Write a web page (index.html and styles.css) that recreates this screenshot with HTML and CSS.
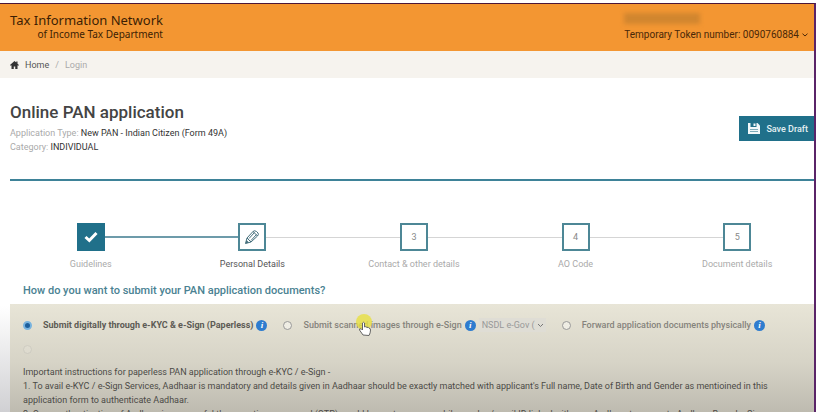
FILE: index.html
```html
<!DOCTYPE html>
<html lang="en">
<head>
  <meta charset="utf-8">
  <title>Online PAN application</title>
  <link rel="stylesheet" href="styles.css">
</head>
<body>
  <div class="page">
    <header class="header">
      <div class="brand">
        <div class="brand-name">Tax Information Network</div>
        <div class="brand-sub">of Income Tax Department</div>
      </div>
      <div class="account">
        <div class="account-name"></div>
        <button class="token" type="button">Temporary Token number: 0090760884
          <svg width="6" height="4" viewBox="0 0 6 4"><path d="M0.5 0.7L3 3L5.5 0.7" fill="none" stroke="currentColor"/></svg>
        </button>
      </div>
    </header>

    <nav class="breadcrumb">
      <svg width="9" height="8" viewBox="0 0 18 16"><path d="M9 0L0 8l1.5 1.5L3 8.3V16h4.500v-5h3v5H15V8.300l1.500 1.200L18 8l-3-2.700V1h-2.500v2z" fill="#333"/></svg>
      <a class="home" href="#">Home</a>
      <span class="slash">/</span>
      <a href="#">Login</a>
    </nav>

    <main class="content">
      <div class="title-row">
        <div class="title">
          <h1>Online PAN application</h1>
          <p class="meta">Application Type: <b>New PAN - Indian Citizen (Form 49A)</b></p>
          <p class="meta">Category: <b>INDIVIDUAL</b></p>
        </div>
        <button class="save" type="button">
          <svg width="12" height="11" viewBox="0 0 24 22"><path d="M0 0h19l5 5v17H0z" fill="#f2f8fa"/><path d="M5 0h12v8H5z" fill="#20708a"/><path d="M11 1h4v5h-4z" fill="#f2f8fa"/><path d="M4 13h16M4 17h16" stroke="#7eacba" stroke-width="2"/></svg>
          Save Draft
        </button>
      </div>

      <ol class="steps">
        <li class="step done">
          <span class="box"><svg width="14" height="12" viewBox="0 0 14 12"><path d="M1.500 6L5.300 9.500L12.500 2" fill="none" stroke="#fff" stroke-width="3"/></svg></span>
          <span class="step-name">Guidelines</span>
        </li>
        <li class="step current">
          <span class="box"><svg width="16" height="16" viewBox="0 0 32 32"><path d="M3 29L6 18L18 5Q21 2 25 5L28 8Q30 11 27 14L14 26Z M6 18L14 26 M10 19L21 7 M14 23L25 11 M18 5L27 14" fill="none" stroke="#456f7c" stroke-width="2"/><path d="M3 29l2-7 5 5z" fill="#456f7c"/></svg></span>
          <span class="step-name">Personal Details</span>
        </li>
        <li class="step">
          <span class="box">3</span>
          <span class="step-name">Contact &amp; other details</span>
        </li>
        <li class="step">
          <span class="box">4</span>
          <span class="step-name">AO Code</span>
        </li>
        <li class="step">
          <span class="box">5</span>
          <span class="step-name">Document details</span>
        </li>
      </ol>

      <h2>How do you want to submit your PAN application documents?</h2>

      <section class="panel">
        <div class="options">
          <div class="option selected">
            <input type="radio" name="mode" id="paperless" checked>
            <label for="paperless">Submit digitally through e-KYC &amp; e-Sign (Paperless)</label>
            <button class="info" type="button" aria-label="About paperless">i</button>
          </div>
          <div class="option">
            <input type="radio" name="mode" id="scanned">
            <label for="scanned">Submit scanned images through e-Sign</label>
            <button class="info" type="button" aria-label="About e-Sign">i</button>
            <select class="provider" aria-label="e-Sign provider">
              <option>NSDL e-Gov (</option>
            </select>
            <svg class="pointer" width="20" height="24" viewBox="0 0 20 24"><circle cx="9" cy="8" r="8" fill="#e7e040" opacity="0.8"/><path d="M8 21L4.500 16Q4 14 6.500 15L7.500 16V9Q8.500 7.500 9.500 9V13Q11 12 12 13.500Q13.500 12.800 14 14.200Q15.500 14 15.500 16Q15.500 19 14 21.500Z" fill="#fff" stroke="#666" stroke-width="1"/></svg>
          </div>
          <div class="option">
            <input type="radio" name="mode" id="physical">
            <label for="physical">Forward application documents physically</label>
            <button class="info" type="button" aria-label="About physical documents">i</button>
          </div>
        </div>
        <div class="option unavailable">
          <input type="radio" name="mode" aria-label="Unavailable" disabled>
        </div>
        <div class="instructions">
          <p>Important instructions for paperless PAN application through e-KYC / e-Sign -</p>
          <p>1. To avail e-KYC / e-Sign Services, Aadhaar is mandatory and details given in Aadhaar should be exactly matched with applicant's Full name, Date of Birth and Gender as mentioined in this application form to authenticate Aadhaar.</p>
          <p>2. Once authentication of Aadhaar is successful then one time password (OTP) would be sent on your mobile number/email ID linked with your Aadhaar to generate Aadhaar Based e-Sign.</p>
        </div>
      </section>
    </main>
  </div>
</body>
</html>
```

FILE: styles.css
```css
:root {
  --teal: #20708a;
  --line: #d5d5d5;
}

* {
  box-sizing: border-box;
}

body {
  margin: 0;
  padding: 3px 1px 0 0;
  height: 100vh;
  overflow: hidden;
  font-family: Roboto, "Liberation Sans", sans-serif;
  font-size: 9px;
  color: #444;
  background: #fff;
}

h1, h2, p, ol {
  margin: 0;
  padding: 0;
}

button {
  font-family: inherit;
  border: none;
  cursor: pointer;
}

.page {
  height: 100%;
  overflow: hidden;
  border-top: 1px solid #4b1638;
  border-right: 2px solid #5a2468;
  background: linear-gradient(#fff 74%, #d0d0d3);
}

/* Header */
.header {
  display: flex;
  justify-content: space-between;
  height: 47px;
  padding: 9px 6px 0 10px;
  background: #f39632;
  color: #4a2808;
}

.brand {
  font-family: "Noto Sans", sans-serif;
  color: #3c1e04;
  text-align: right;
}

.brand-name {
  font-size: 13px;
  line-height: 15px;
}

.brand-sub {
  font-size: 10px;
  line-height: 12px;
}

.account-name {
  width: 76px;
  height: 11px;
  background: #d1862f;
  filter: blur(2px);
}

.token {
  display: flex;
  align-items: center;
  gap: 3px;
  margin-top: 4px;
  padding: 0;
  background: none;
  color: #4a2808;
  font-size: 10px;
  line-height: 14px;
}

.breadcrumb {
  display: flex;
  align-items: center;
  gap: 6px;
  height: 27px;
  padding-left: 10px;
  background: #f6f3ee;
}

.breadcrumb a, .slash {
  color: #aaa;
  text-decoration: none;
}

.breadcrumb .home {
  color: #555;
}

/* Content */
.content {
  padding-left: 10px;
}

.title-row {
  display: flex;
  justify-content: space-between;
  align-items: center;
  height: 103px;
  border-bottom: 2px solid #3e8298;
}

.title {
  padding-bottom: 4px;
}

h1 {
  padding-bottom: 2px;
  font-size: 17px;
  line-height: 24px;
  font-weight: 500;
}

.meta {
  color: #aaa;
  line-height: 14px;
}

.meta b {
  font-weight: 400;
  color: #333;
}

.save {
  display: flex;
  align-items: center;
  gap: 6px;
  height: 25px;
  padding: 0 6px 0 9px;
  background: var(--teal);
  color: #e4f0f4;
  font-size: 9px;
  font-weight: 500;
}

/* Steps */
.steps {
  display: flex;
  margin-right: -4px;
  padding-top: 42px;
  list-style: none;
}

.step {
  flex: 1;
  display: grid;
  grid-template-columns: 1fr 28px 1fr;
  align-items: center;
  row-gap: 6px;
  color: #aaa;
}

.step::before, .step::after {
  content: "";
  grid-row: 1;
  height: 1px;
  background: var(--line);
}

.step::before {
  grid-column: 1;
}

.step::after {
  grid-column: 3;
}

.step:first-child::before, .step:last-child::after {
  background: none;
}

.done::after, .current::before {
  height: 2px;
  background: #6d9baa;
}

.box {
  grid-row: 1;
  grid-column: 2;
  display: flex;
  align-items: center;
  justify-content: center;
  height: 28px;
  border: 2px solid #4d8796;
  color: #888;
}

.done .box {
  background: var(--teal);
  border-color: var(--teal);
}

.step-name {
  grid-column: 1 / 4;
  text-align: center;
  line-height: 14px;
}

.current .step-name {
  color: #555;
}

h2 {
  padding: 13px 0 6px 13px;
  color: #4a8292;
  font-size: 11px;
  line-height: 14px;
  font-weight: 500;
}

/* Submission panel */
.panel {
  height: 150px;
  padding: 14px 26px 0 13px;
  background: linear-gradient(#e8e5d7, #d6d3c6 60px, #bebbb0 108px);
}

.options {
  display: flex;
  gap: 16px;
}

.option {
  position: relative;
  display: flex;
  align-items: center;
  height: 14px;
  color: #85837c;
  font-weight: 500;
  white-space: nowrap;
}

.selected {
  color: #5d5b55;
  font-weight: 700;
}

.unavailable {
  margin: 10px 0 9px;
  opacity: 0.2;
}

.option input {
  appearance: none;
  width: 9px;
  height: 9px;
  margin: 0 11px 0 0;
  border: 1px solid #999;
  border-radius: 50%;
  background: #efede4;
}

.option input:checked {
  border: 2px solid #78b3df;
  background: #1d5f9c;
}

.info {
  width: 11px;
  height: 11px;
  margin-left: 3px;
  padding: 0;
  border-radius: 50%;
  background: #2e7ccf;
  color: #fff;
  font: italic bold 9px/11px "Liberation Serif", serif;
}

.provider {
  appearance: none;
  width: 67px;
  height: 14px;
  margin-left: 3px;
  padding: 0 0 0 3px;
  border: none;
  color: #999;
  font-family: inherit;
  font-size: 9px;
  background: #dfddd5 url("data:image/svg+xml,%3Csvg xmlns='http://www.w3.org/2000/svg' width='7' height='5'%3E%3Cpath d='M1 1l2.500 2.500L6 1' fill='none' stroke='%23777'/%3E%3C/svg%3E") no-repeat right 2px center;
}

/* Highlighted mouse pointer over the second option */
.pointer {
  position: absolute;
  left: 72px;
  top: -4px;
}

.instructions {
  color: #4b4a46;
  line-height: 14px;
}
```
